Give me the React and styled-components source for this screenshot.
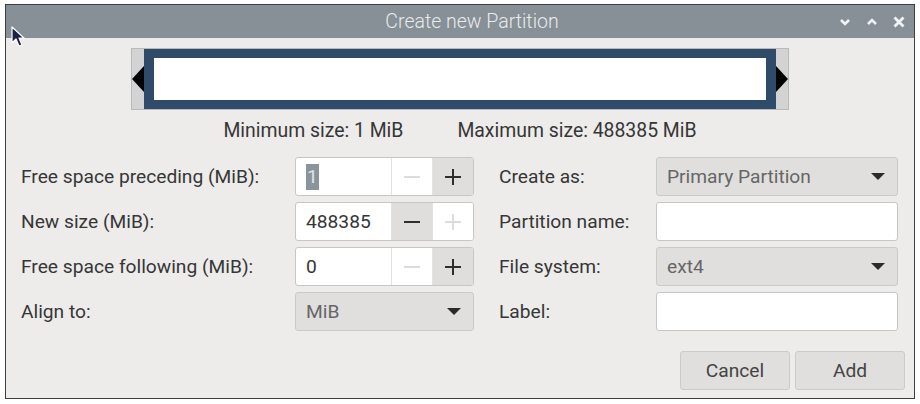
import React from "react";
import styled, { createGlobalStyle } from "styled-components";

const Global = createGlobalStyle`
  html, body { margin: 0; padding: 0; background: #ffffff; }
  body { font-family: Roboto, "Noto Sans", sans-serif; }
`;

const Page = styled.div`
  position: relative;
  width: 920px;
  height: 404px;
  padding: 4px 0 0 5px;
  box-sizing: border-box;
`;

const Window = styled.div`
  width: 910px;
  height: 395px;
  box-sizing: border-box;
  border: 1px solid #3d3d3d;
  background: #edeceb;
  display: flex;
  flex-direction: column;
`;

const TitleBar = styled.div`
  position: relative;
  height: 33px;
  background: #878f97;
  display: flex;
  align-items: center;
  justify-content: center;
  padding-left: 24px;
  color: #e9ebec;
  font-size: 19.5px;
  font-weight: 300;
`;

const Controls = styled.div`
  position: absolute;
  right: 8px;
  top: 0;
  height: 100%;
  display: flex;
  align-items: center;
  gap: 13px;
`;

const Body = styled.div`
  flex: 1;
  display: flex;
  flex-direction: column;
  padding: 10px 9px 8px 15px;
`;

const BarRow = styled.div`
  display: flex;
  justify-content: center;
  margin-left: -6px;
`;

const Gutter = styled.div`
  width: 658px;
  height: 62px;
  box-sizing: border-box;
  background: #d3d3d3;
  border: 1px solid #b9b9b9;
  display: flex;
  align-items: stretch;
  justify-content: space-between;
`;

const Handle = styled.div`
  width: 12px;
  display: flex;
  align-items: center;
  justify-content: ${(p) => (p.$side === "left" ? "flex-start" : "flex-end")};
`;

const Block = styled.div`
  flex: 1;
  background: #2f4b69;
  padding: 9px 10px;
  display: flex;
`;

const Inner = styled.div`
  flex: 1;
  background: #ffffff;
`;

const SizeRow = styled.div`
  display: flex;
  justify-content: center;
  gap: 54px;
  margin: 10px 0 0 -6px;
  font-size: 19.4px;
  color: #363636;
  line-height: 22px;
`;

const Form = styled.div`
  display: grid;
  grid-template-columns: 274px 179px 182px 242px;
  row-gap: 6px;
  margin-top: 15px;
`;

const Label = styled.div`
  display: flex;
  align-items: center;
  height: 39px;
  padding-left: ${(p) => (p.$indent ? "25px" : "0")};
  font-size: 19.2px;
  color: #363636;
`;

const Spin = styled.div`
  display: flex;
  height: 39px;
  box-sizing: border-box;
  border: 1px solid #c6c6c6;
  border-radius: 3px;
  background: #fff;
  overflow: hidden;
`;

const SpinText = styled.div`
  flex: 1;
  display: flex;
  align-items: center;
  padding-left: 10px;
  font-size: 19.2px;
  color: #363636;
`;

const Selected = styled.span`
  background: #8b949d;
  color: #dfe3e6;
  padding: 0 1px;
  line-height: 26px;
`;

const SpinBtn = styled.div`
  width: 40px;
  display: flex;
  align-items: center;
  justify-content: center;
  border-left: 1px solid #e2e2e2;
  background: ${(p) => (p.$on ? "#dfdedd" : "#ffffff")};
  color: ${(p) => (p.$on ? "#2e2e2e" : "#dcdcdc")};
`;

const Combo = styled.div`
  height: 39px;
  box-sizing: border-box;
  border: 1px solid #cacaca;
  border-radius: 3px;
  background: #e0dfde;
  display: flex;
  align-items: center;
  justify-content: space-between;
  padding: 0 12px 0 10px;
  font-size: 19.2px;
  color: #666;
`;

const Entry = styled.div`
  height: 39px;
  box-sizing: border-box;
  border: 1px solid #c6c6c6;
  border-radius: 3px;
  background: #ffffff;
`;

const Buttons = styled.div`
  margin-top: auto;
  display: flex;
  justify-content: flex-end;
  gap: 5px;
`;

const Button = styled.div`
  width: 110px;
  height: 39px;
  box-sizing: border-box;
  border: 1px solid #cbcbcb;
  border-radius: 3px;
  background: #e0dfde;
  display: flex;
  align-items: center;
  justify-content: center;
  font-size: 19.2px;
  color: #444;
`;

const Cursor = styled.svg`
  position: absolute;
  left: 10px;
  top: 25px;
`;

const Minus = () => (
  <svg width="18" height="18" viewBox="0 0 18 18">
    <rect x="1" y="8" width="16" height="2" fill="currentColor" />
  </svg>
);
const Plus = () => (
  <svg width="18" height="18" viewBox="0 0 18 18">
    <rect x="1" y="8" width="16" height="2" fill="currentColor" />
    <rect x="8" y="1" width="2" height="16" fill="currentColor" />
  </svg>
);
const Arrow = () => (
  <svg width="14" height="8" viewBox="0 0 14 8">
    <polygon points="0,0 14,0 7,7" fill="#2b2b2b" />
  </svg>
);

const SpinBox = ({ value, minus, plus, selected }) => (
  <Spin>
    <SpinText>{selected ? <Selected>{value}</Selected> : value}</SpinText>
    <SpinBtn $on={minus}><Minus /></SpinBtn>
    <SpinBtn $on={plus}><Plus /></SpinBtn>
  </Spin>
);

export default function App() {
  return (
    <Page>
      <Global />
      <Window>
        <TitleBar>
          Create new Partition
          <Controls>
            <svg width="14" height="14" viewBox="0 0 14 14">
              <polyline points="3,5 7,9 11,5" fill="none" stroke="#f2f3f4" strokeWidth="2.6" />
            </svg>
            <svg width="14" height="14" viewBox="0 0 14 14">
              <polyline points="3,9 7,5 11,9" fill="none" stroke="#f2f3f4" strokeWidth="2.6" />
            </svg>
            <svg width="14" height="14" viewBox="0 0 14 14">
              <path d="M2.5 2.5 L11.5 11.5 M11.5 2.5 L2.5 11.5" stroke="#f2f3f4" strokeWidth="2.8" />
            </svg>
          </Controls>
        </TitleBar>
        <Body>
          <BarRow>
            <Gutter>
              <Handle $side="left">
                <svg width="12" height="26" viewBox="0 0 12 26">
                  <polygon points="12,0 12,26 0,13" fill="#000" />
                </svg>
              </Handle>
              <Block><Inner /></Block>
              <Handle $side="right">
                <svg width="12" height="26" viewBox="0 0 12 26">
                  <polygon points="0,0 0,26 12,13" fill="#000" />
                </svg>
              </Handle>
            </Gutter>
          </BarRow>
          <SizeRow>
            <span>Minimum size: 1 MiB</span>
            <span>Maximum size: 488385 MiB</span>
          </SizeRow>
          <Form>
            <Label>Free space preceding (MiB):</Label>
            <SpinBox value="1" selected minus={false} plus />
            <Label $indent>Create as:</Label>
            <Combo>Primary Partition<Arrow /></Combo>

            <Label>New size (MiB):</Label>
            <SpinBox value="488385" minus plus={false} />
            <Label $indent>Partition name:</Label>
            <Entry />

            <Label>Free space following (MiB):</Label>
            <SpinBox value="0" minus={false} plus />
            <Label $indent>File system:</Label>
            <Combo>ext4<Arrow /></Combo>

            <Label>Align to:</Label>
            <Combo>MiB<Arrow /></Combo>
            <Label $indent>Label:</Label>
            <Entry />
          </Form>
          <Buttons>
            <Button>Cancel</Button>
            <Button>Add</Button>
          </Buttons>
        </Body>
      </Window>
      <Cursor width="16" height="24" viewBox="0 0 16 24">
        <polygon points="2,2 2,18 6,14 9,21 12,20 9,13 14,13" fill="#1c1f4a" stroke="#ffffff" strokeWidth="1.2" strokeLinejoin="round" />
      </Cursor>
    </Page>
  );
}
